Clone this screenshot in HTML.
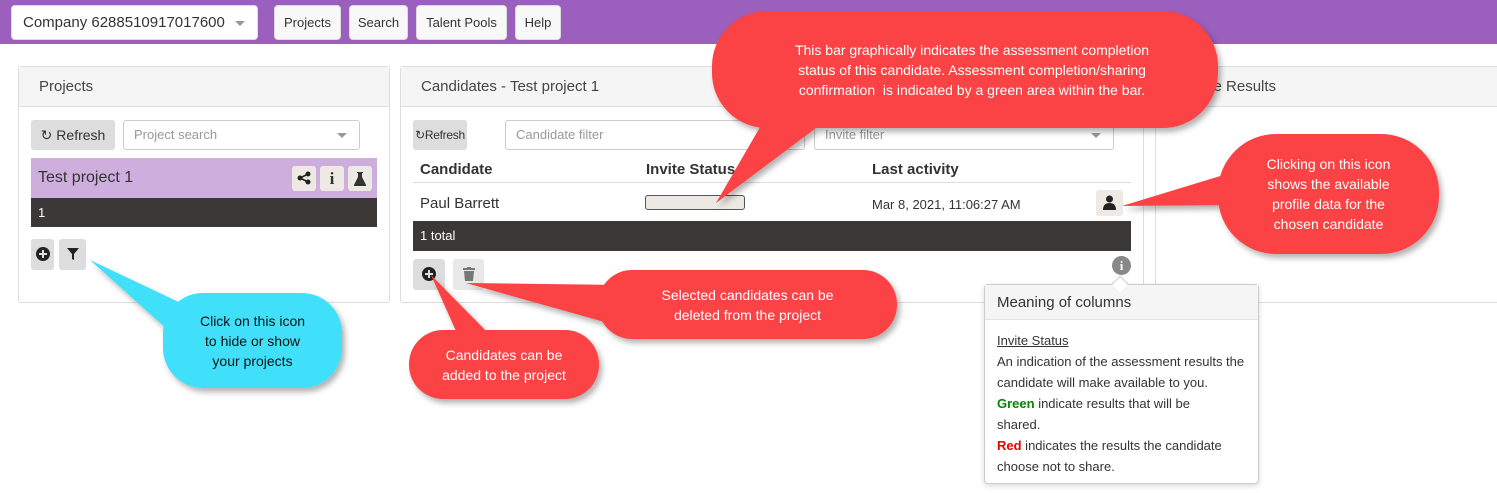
<!DOCTYPE html>
<html><head><meta charset="utf-8"><style>
*{box-sizing:border-box;margin:0;padding:0}
body{width:1497px;height:493px;overflow:hidden;background:#fff;font-family:"Liberation Sans",sans-serif;color:#333;position:relative;font-size:14px}
.a{position:absolute}
.top{left:0;top:0;width:1497px;height:44px;background:#9b5fbe}
.nb{background:#f8f8f9;border:1px solid #ddd;border-radius:4px;top:5px;height:35px;font-size:13px;line-height:33px;text-align:center;color:#333}
.panel{border:1px solid #ddd;border-radius:3px;background:#fff}
.ph{left:0;top:0;right:0;height:40px;background:#f5f5f5;border-bottom:1px solid #ddd;font-size:15px;line-height:40px;padding-left:20px;color:#444}
.btn{background:#ddd;border-radius:3px;font-size:14px;line-height:30px;text-align:center}
.inp{border:1px solid #ccc;border-radius:3px;font-size:13px;color:#999;line-height:28px;padding-left:10px}
.caret{position:absolute;right:12px;top:12px;border-left:5px solid transparent;border-right:5px solid transparent;border-top:5px solid #999}
.ct{color:#fff;font-size:14px;text-align:center;line-height:20px}
</style></head><body>
<div class="a top"></div>
<div class="a nb" style="left:11px;width:247px;text-align:left;padding-left:11px;font-size:15px;background:#fff">Company 6288510917017600<span style="position:absolute;right:12px;top:15px;border-left:5px solid transparent;border-right:5px solid transparent;border-top:5px solid #999"></span></div>
<div class="a nb" style="left:274px;width:67px">Projects</div>
<div class="a nb" style="left:349px;width:59px">Search</div>
<div class="a nb" style="left:416px;width:91px">Talent Pools</div>
<div class="a nb" style="left:515px;width:46px">Help</div>

<!-- Projects panel -->
<div class="a panel" style="left:18px;top:66px;width:372px;height:237px">
<div class="a ph">Projects</div>
</div>
<div class="a btn" style="left:31px;top:120px;width:84px">&#x21bb; Refresh</div>
<div class="a inp" style="left:123px;top:120px;width:237px;height:30px">Project search<span class="caret"></span></div>
<div class="a" style="left:31px;top:158px;width:346px;height:40px;background:#ceaedd;font-size:16px;line-height:40px;padding-left:7px;color:#333">Test project 1</div>
<div class="a" style="left:292px;top:166px;width:24px;height:25px;background:#eee9e2;border-radius:3px;text-align:center"><svg width="14" height="14" style="margin-top:5px"><circle cx="11" cy="3" r="2.5" fill="#222"/><circle cx="3" cy="7" r="2.5" fill="#222"/><circle cx="11" cy="11" r="2.5" fill="#222"/><path d="M11 3L3 7l8 4" stroke="#222" stroke-width="1.6" fill="none"/></svg></div>
<div class="a" style="left:320px;top:166px;width:24px;height:25px;background:#eee9e2;border-radius:3px;font-weight:bold;font-family:'Liberation Serif',serif;font-size:17px;text-align:center;line-height:25px">i</div>
<div class="a" style="left:348px;top:166px;width:24px;height:25px;background:#eee9e2;border-radius:3px;text-align:center"><svg width="12" height="14" viewBox="0 0 12 14" style="margin-top:6px"><path d="M3 0h6v1H8v4l4 8v1H0v-1l4-8V1H3z" fill="#333"/></svg></div>
<div class="a" style="left:31px;top:198px;width:346px;height:29px;background:#3a3938;color:#fff;font-size:13px;line-height:29px;padding-left:7px">1</div>
<div class="a btn" style="left:31px;top:239px;width:23px;height:31px"><svg width="14" height="14" style="margin-top:8px"><circle cx="7" cy="7" r="7" fill="#222"/><path d="M7 3v8M3 7h8" stroke="#ddd" stroke-width="2"/></svg></div>
<div class="a btn" style="left:59px;top:239px;width:27px;height:31px"><svg width="12" height="12" style="margin-top:9px"><path d="M0 0h12L7 6v6L5 11V6z" fill="#222"/></svg></div>

<!-- Candidates panel -->
<div class="a panel" style="left:400px;top:66px;width:744px;height:237px">
<div class="a ph">Candidates - Test project 1</div>
</div>
<div class="a btn" style="left:413px;top:120px;width:54px;font-size:12px;letter-spacing:-0.3px">&#x21bb;Refresh</div>
<div class="a inp" style="left:505px;top:120px;width:300px;height:30px">Candidate filter</div>
<div class="a inp" style="left:814px;top:120px;width:300px;height:30px">Invite filter<span class="caret"></span></div>
<div class="a" style="left:420px;top:161px;font-weight:bold;font-size:15px">Candidate</div>
<div class="a" style="left:646px;top:161px;font-weight:bold;font-size:15px">Invite Status</div>
<div class="a" style="left:872px;top:161px;font-weight:bold;font-size:15px">Last activity</div>
<div class="a" style="left:413px;top:182px;width:718px;height:1px;background:#ddd"></div>
<div class="a" style="left:420px;top:195px;font-size:15px">Paul Barrett</div>
<div class="a" style="left:645px;top:195px;width:100px;height:15px;background:#ece8e4;border:1px solid #555;border-radius:3px"></div>
<div class="a" style="left:872px;top:197px;font-size:13px">Mar 8, 2021, 11:06:27 AM</div>
<div class="a" style="left:1096px;top:190px;width:27px;height:26px;background:#eee9e2;border-radius:3px"><svg width="27" height="26"><circle cx="13.5" cy="9" r="3.5" fill="#222"/><path d="M7 20q0-7 6.5-7t6.5 7z" fill="#222"/></svg></div>
<div class="a" style="left:413px;top:221px;width:718px;height:30px;background:#3a3938;color:#fff;font-size:13px;line-height:30px;padding-left:7px">1 total</div>
<div class="a btn" style="left:413px;top:259px;width:32px;height:31px"><svg width="14" height="14" style="margin-top:8px"><circle cx="7" cy="7" r="7" fill="#222"/><path d="M7 3v8M3 7h8" stroke="#ddd" stroke-width="2"/></svg></div>
<div class="a btn" style="left:453px;top:259px;width:31px;height:31px;background:#e8e8e8"><svg width="12" height="14" style="margin-top:8px"><path d="M0 1h12v2H0zM4 0h4v1H4zM1 4h10l-1 10H2z" fill="#777"/></svg></div>
<div class="a" style="left:1112px;top:256px;width:19px;height:19px;border-radius:50%;background:#888;color:#fff;font-weight:bold;font-family:'Liberation Serif',serif;font-size:13px;text-align:center;line-height:19px">i</div>

<!-- Results panel -->
<div class="a panel" style="left:1155px;top:66px;width:350px;height:237px">
<div class="a ph" style="padding-left:30px">Invite Results</div>
</div>

<!-- popover -->
<div class="a" style="left:984px;top:284px;width:275px;height:200px;background:#fff;border:1px solid #ccc;border-radius:4px;box-shadow:0 2px 6px rgba(0,0,0,.15)">
<div style="height:35px;background:#f5f5f5;border-bottom:1px solid #e5e5e5;font-size:15px;line-height:35px;padding-left:12px;color:#333">Meaning of columns</div>
<div style="padding:10px 12px 0 12px;font-size:13px;line-height:21px;color:#333;width:272px"><u>Invite Status</u><br>An indication of the assessment results the candidate will make available to you.<br><b style="color:#080">Green</b> indicate results that will be<br>shared.<br><b style="color:#e00">Red</b> indicates the results the candidate choose not to share.</div>
</div>
<div class="a" style="left:1114px;top:278px;width:12px;height:12px;background:#fff;border-left:1px solid #ccc;border-top:1px solid #ccc;transform:rotate(45deg)"></div>

<!-- callouts -->
<svg class="a" style="left:0;top:0" width="1497" height="493">
<defs><filter id="s" x="-20%" y="-20%" width="140%" height="140%"><feDropShadow dx="3" dy="4" stdDeviation="3" flood-color="#000" flood-opacity=".3"/></filter></defs>
<g filter="url(#s)" fill="#fb4245">
<rect x="712" y="11" width="506" height="117" rx="55"/>
<polygon points="770,110 840,110 716,203"/>
<rect x="1218" y="134" width="221" height="120" rx="58"/>
<polygon points="1240,170 1250,205 1122,206"/>
<rect x="598" y="270" width="299" height="69" rx="34"/>
<polygon points="620,285 615,325 466,283"/>
<rect x="409" y="330" width="190" height="69" rx="34"/>
<polygon points="460,340 495,340 431,275"/>
</g>
<g filter="url(#s)" fill="#40dffa">
<rect x="163" y="293" width="179" height="95" rx="40"/>
<polygon points="185,305 168,330 90,260"/>
</g>
</svg>
<div class="a ct" style="left:712px;top:40px;width:520px">This bar graphically indicates the assessment completion<br>status of this candidate. Assessment completion/sharing<br>confirmation &nbsp;is indicated by a green area within the bar.</div>
<div class="a ct" style="left:1218px;top:154px;width:221px">Clicking on this icon<br>shows the available<br>profile data for the<br>chosen candidate</div>
<div class="a ct" style="left:598px;top:285px;width:299px">Selected candidates can be<br>deleted from the project</div>
<div class="a ct" style="left:409px;top:345px;width:190px">Candidates can be<br>added to the project</div>
<div class="a ct" style="left:163px;top:311px;width:179px;color:#111">Click on this icon<br>to hide or show<br>your projects</div>
</body></html>
